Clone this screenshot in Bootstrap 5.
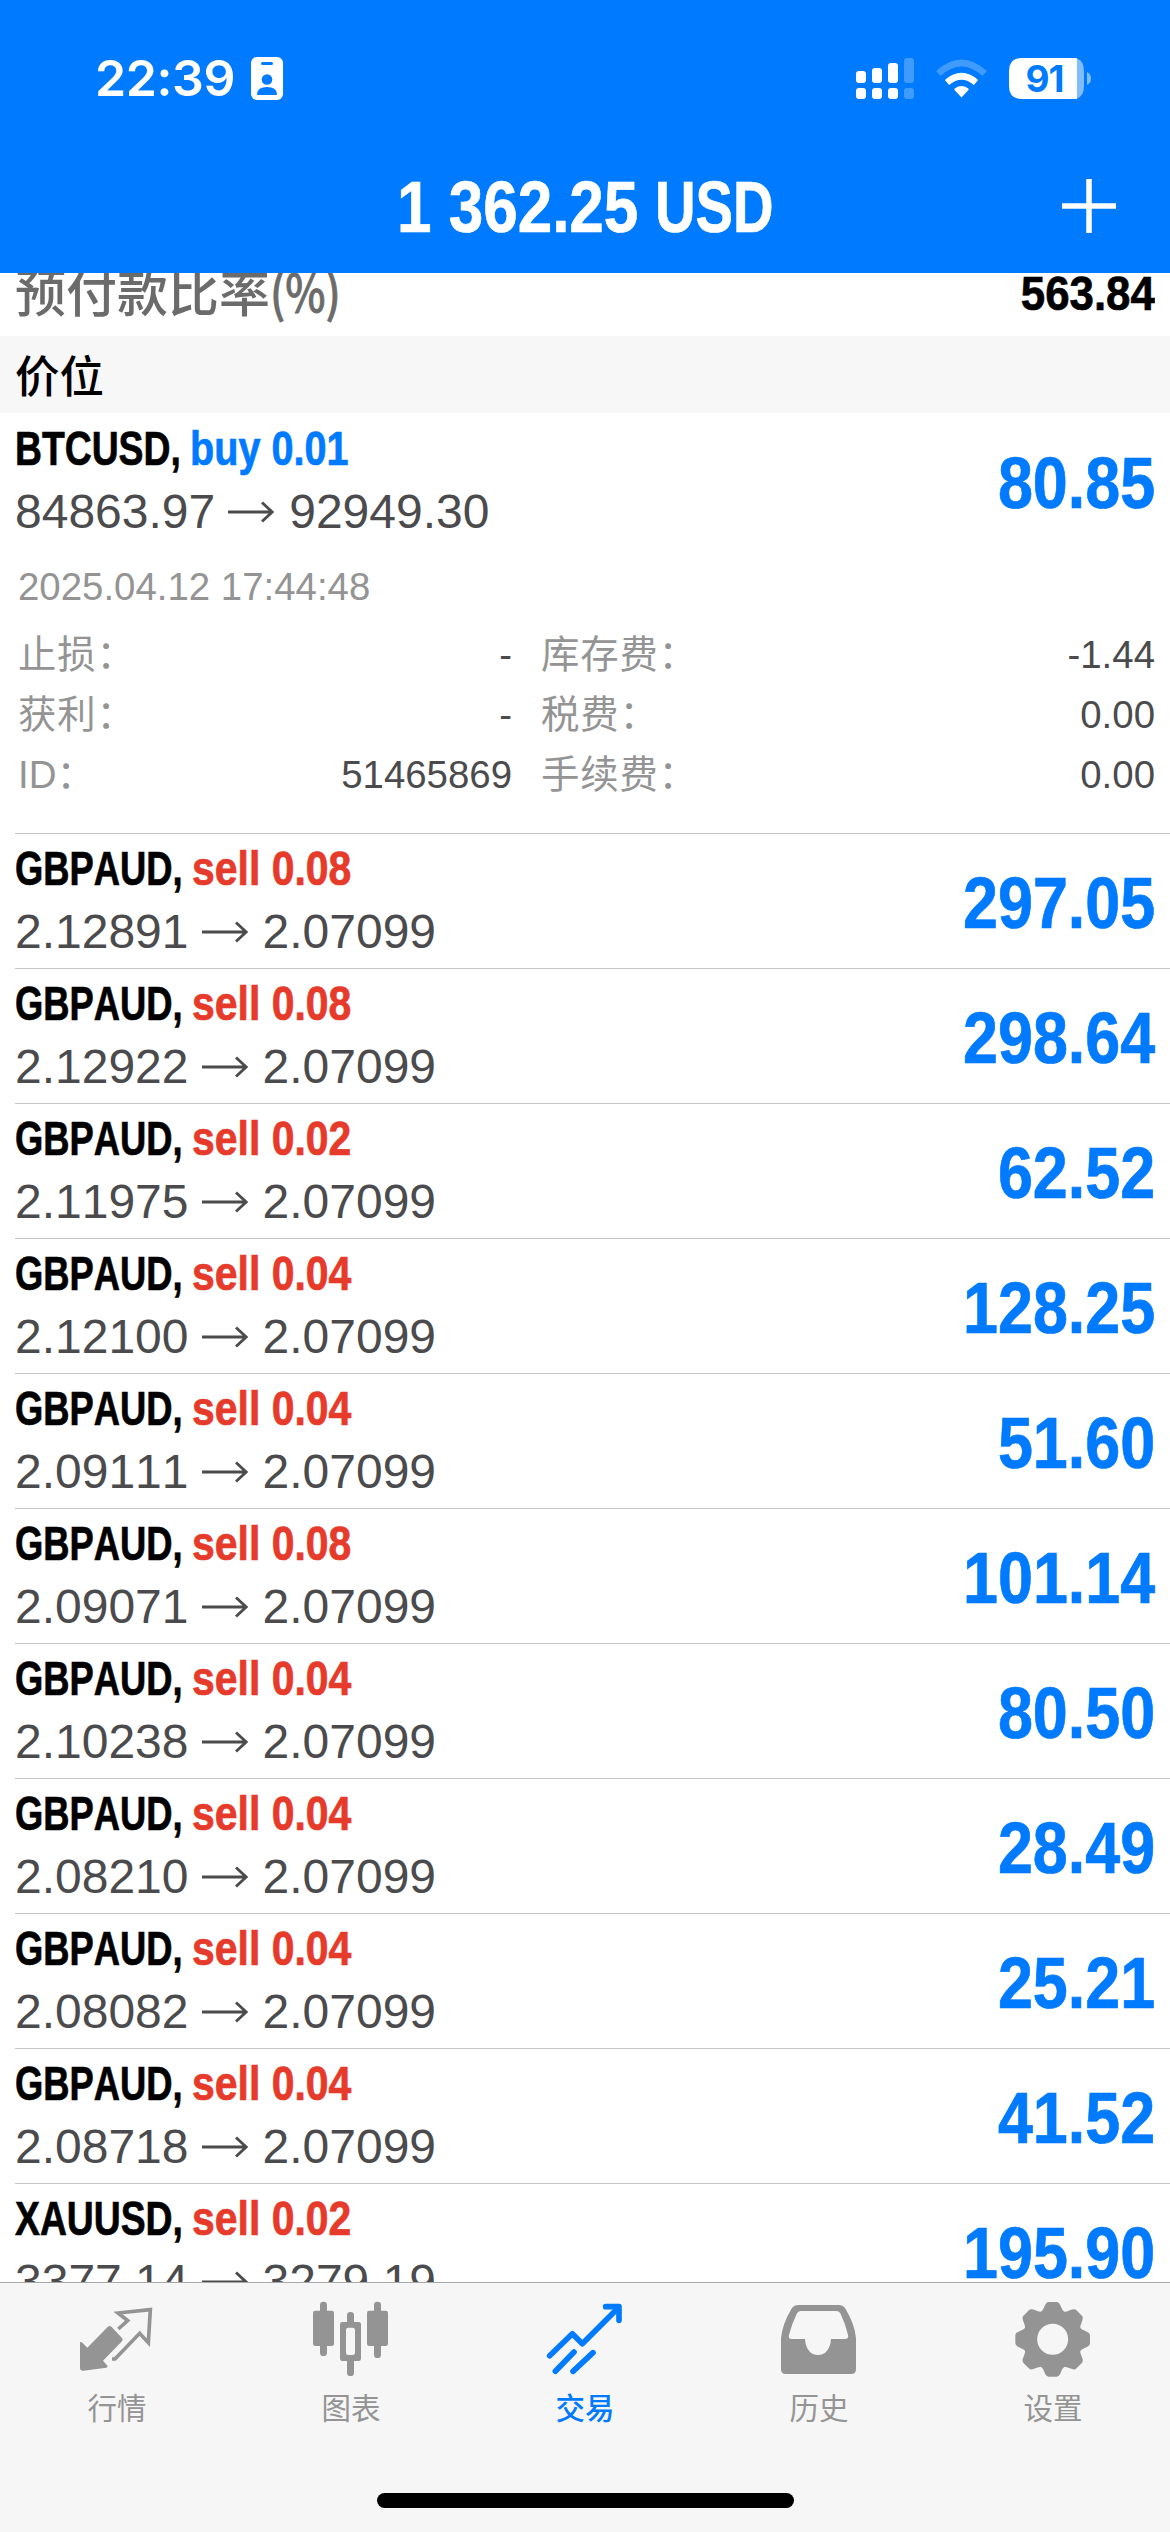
<!DOCTYPE html>
<html lang="zh-CN">
<head>
<meta charset="utf-8">
<meta name="viewport" content="width=device-width, initial-scale=1">
<title>交易</title>
<link href="https://cdn.jsdelivr.net/npm/bootstrap@5.3.0/dist/css/bootstrap.min.css" rel="stylesheet">
<style>
:root { --tint: #007aff; --loss: #e63a2b; --muted: #949494; --ink: #4b4b4d; }
html, body { height: 2532px; overflow: hidden; }
body { font-family: "Liberation Sans", "Noto Sans CJK SC", sans-serif; font-kerning: none; color: #000; background: #fff; }
.screen { width: 1170px; height: 2532px; }
.topbar { height: 273px; background: var(--tint); color: #fff; flex: none; }
.status { height: 152px; padding: 4px 77px 0 95px; }
.clock { font: 600 50px/60px Inter, sans-serif; width: 156px; white-space: nowrap; letter-spacing: -.4px; }
.batt-text { font: 700 37px Inter, sans-serif; letter-spacing: -1px; }
.titlebar { height: 108px; display: grid; grid-template-columns: 1fr auto 1fr; align-items: center; }
.cond { display: inline-block; font-weight: 700; white-space: nowrap; transform-origin: left; -webkit-text-stroke: .7px currentColor; }
.balance { font-size: 72px; line-height: 80px; padding: 2px 0 0 2px; }
.amount { width: 258px; transform: scaleX(.861); }
.currency { width: 120px; transform: scaleX(.78); }
.plus { width: 54px; height: 54px; margin-right: 54px; }
.level { height: 63px; padding: 0 15px; overflow: hidden; flex: none; }
.level-name { font: 500 51px/76px "Noto Sans CJK SC", sans-serif; color: #6b6b6b; white-space: nowrap; margin-top: -21px; }
.pct { display: inline-block; transform: scaleX(.84); transform-origin: left; -webkit-text-stroke: .8px currentColor; }
.level-val { font-size: 49px; line-height: 56px; transform: scaleX(.895); transform-origin: right; margin-top: -8px; }
.section-head { height: 77px; line-height: 75px; padding-left: 15px; background: #f7f7f7; font-size: 44.5px; font-weight: 500; font-family: "Noto Sans CJK SC", sans-serif; flex: none; }
.positions { flex: 1 1 0; min-height: 0; overflow: hidden; }
.deal { margin-left: 15px; padding: 3px 15px 0 0; border-top: 1px solid #c4c4c6; height: 135px; }
.deal.open { height: 420px; border-top-color: transparent; }
.line { height: 63px; line-height: 63px; font-size: 48px; white-space: nowrap; }
.sym { width: 177px; transform: scaleX(.757); }
.sym.btc { width: 175px; transform: scaleX(.777); }
.sym.xau { transform: scaleX(.777); }
.sell { color: var(--loss); transform: scaleX(.853); }
.buy { color: var(--tint); transform: scaleX(.825); }
.price { color: var(--ink); }
.arrow { width: 46px; height: 22px; margin: 0 15px 0 13px; flex: none; }
.profit { font-size: 72px; line-height: 80px; margin-top: 26px; color: var(--tint); transform: scaleX(.873); transform-origin: right; }
.detail { font-size: 38.4px; line-height: 60px; margin-top: 14px; color: var(--muted); padding-left: 3px; }
.stamp { margin-bottom: 8px; }
.detail-l { width: 494px; }
.detail-r { flex: 1; margin-left: 29px; }
.detail b { font-weight: 400; color: var(--ink); }
.detail .caption-cn { letter-spacing: .8px; }
.tabs { height: 250px; background: #f6f6f6; border-top: 1px solid #a9a9ab; flex: none; padding-top: 15px; }
.tab-item { flex: 1; color: #949494; font: 400 29.5px/44px "Noto Sans CJK SC", sans-serif; }
.tab-item svg { width: 80px; height: 80px; }
.tab-item span { margin-top: 6px; }
.tab-item.on { color: var(--tint); font-weight: 500; }
.home { width: 417px; height: 15px; background: #000; margin-bottom: 24px; }
</style>
</head>
<body>
<svg width="0" height="0" class="position-absolute">
  <symbol id="arrow" viewBox="0 0 46 22"><path d="M0 11H44M34 1.5L44.2 11L34 20.5" fill="none" stroke="currentColor" stroke-width="2.8"/></symbol>
</svg>
<div class="screen d-flex flex-column">
  <header class="topbar">
    <div class="status d-flex align-items-center">
      <span class="clock">22:39</span>
      <svg width="32" height="43" viewBox="0 0 32 43"><rect width="32" height="43" rx="6" fill="#fff"/><rect x="10" y="5" width="12" height="3" rx="1.5" fill="#007aff"/><circle cx="16" cy="22.5" r="5.3" fill="#007aff"/><path d="M6 37Q6.500 30 16 30T26 37Q26 38 25 38H7Q6 38 6 37Z" fill="#007aff"/></svg>
      <svg class="ms-auto" width="237" height="44" viewBox="856 55 237 44">
        <g fill="#fff">
          <rect x="856" y="70" width="10" height="12" rx="3"/><rect x="872" y="67" width="10" height="15" rx="3"/><rect x="888" y="62" width="10" height="20" rx="3"/>
          <rect x="856" y="87" width="10" height="11" rx="3"/><rect x="872" y="87" width="10" height="11" rx="3"/><rect x="888" y="87" width="10" height="11" rx="3"/>
          <g opacity=".25"><rect x="904" y="57" width="10" height="25" rx="3"/><rect x="904" y="87" width="10" height="11" rx="3"/></g>
          <path d="M961.500 96.500L954.500 89Q954 88 955 87.300Q961.500 82.500 968 87.300Q969 88 968.500 89Z"/>
        </g>
        <path d="M947 81.500Q961.500 69 976 81.500" fill="none" stroke="#fff" stroke-width="6.500"/>
        <path d="M938.300 72.500Q961.500 51.500 984.700 72.500" fill="none" stroke="#fff" stroke-width="6.500" opacity=".25"/>
        <path d="M1022 57H1077V98H1022Q1009 98 1009 85V70Q1009 57 1022 57Z" fill="#fff"/>
        <path d="M1077 57.500Q1084 60 1084 70V85Q1084 95 1077 97.500Z" fill="#fff" opacity=".5"/>
        <path d="M1087 71Q1091 73 1091 77.500T1087 84Z" fill="#fff" opacity=".5"/>
        <text class="batt-text" x="1044.500" y="91" text-anchor="middle" fill="#007aff">91</text>
      </svg>
    </div>
    <div class="titlebar">
      <span></span><div class="balance d-flex"><span class="cond amount">1 362.25</span><span class="cond currency">USD</span></div>
      <svg class="plus ms-auto" viewBox="0 0 54 54"><path d="M27 0V54M0 27H54" stroke="#fff" stroke-width="5.500"/></svg>
    </div>
  </header>

  <div class="level d-flex justify-content-between align-items-start"><span class="level-name">预付款比率<span class="pct">(%)</span></span><span class="cond level-val">563.84</span></div>
  <div class="section-head">价位</div>

  <main class="positions">
    <div class="deal open">
      <div class="d-flex justify-content-between align-items-start">
        <div><div class="line"><span class="cond sym btc">BTCUSD,</span><span class="cond buy">buy 0.01</span></div>
        <div class="line price d-flex align-items-center">84863.97<svg class="arrow"><use href="#arrow"/></svg>92949.30</div></div>
        <span class="cond profit">80.85</span>
      </div>
      <div class="detail">
        <div class="stamp">2025.04.12 17:44:48</div>
        <div class="d-flex"><div class="detail-l d-flex justify-content-between"><span class="caption-cn">止损：</span><b>-</b></div><div class="detail-r d-flex justify-content-between"><span class="caption-cn">库存费：</span><b>-1.44</b></div></div>
        <div class="d-flex"><div class="detail-l d-flex justify-content-between"><span class="caption-cn">获利：</span><b>-</b></div><div class="detail-r d-flex justify-content-between"><span class="caption-cn">税费：</span><b>0.00</b></div></div>
        <div class="d-flex"><div class="detail-l d-flex justify-content-between"><span>ID：</span><b>51465869</b></div><div class="detail-r d-flex justify-content-between"><span class="caption-cn">手续费：</span><b>0.00</b></div></div>
      </div>
    </div>
    <div class="deal d-flex justify-content-between align-items-start">
      <div><div class="line"><span class="cond sym">GBPAUD,</span><span class="cond sell">sell 0.08</span></div>
      <div class="line price d-flex align-items-center">2.12891<svg class="arrow"><use href="#arrow"/></svg>2.07099</div></div>
      <span class="cond profit">297.05</span>
    </div>
    <div class="deal d-flex justify-content-between align-items-start">
      <div><div class="line"><span class="cond sym">GBPAUD,</span><span class="cond sell">sell 0.08</span></div>
      <div class="line price d-flex align-items-center">2.12922<svg class="arrow"><use href="#arrow"/></svg>2.07099</div></div>
      <span class="cond profit">298.64</span>
    </div>
    <div class="deal d-flex justify-content-between align-items-start">
      <div><div class="line"><span class="cond sym">GBPAUD,</span><span class="cond sell">sell 0.02</span></div>
      <div class="line price d-flex align-items-center">2.11975<svg class="arrow"><use href="#arrow"/></svg>2.07099</div></div>
      <span class="cond profit">62.52</span>
    </div>
    <div class="deal d-flex justify-content-between align-items-start">
      <div><div class="line"><span class="cond sym">GBPAUD,</span><span class="cond sell">sell 0.04</span></div>
      <div class="line price d-flex align-items-center">2.12100<svg class="arrow"><use href="#arrow"/></svg>2.07099</div></div>
      <span class="cond profit">128.25</span>
    </div>
    <div class="deal d-flex justify-content-between align-items-start">
      <div><div class="line"><span class="cond sym">GBPAUD,</span><span class="cond sell">sell 0.04</span></div>
      <div class="line price d-flex align-items-center">2.09111<svg class="arrow"><use href="#arrow"/></svg>2.07099</div></div>
      <span class="cond profit">51.60</span>
    </div>
    <div class="deal d-flex justify-content-between align-items-start">
      <div><div class="line"><span class="cond sym">GBPAUD,</span><span class="cond sell">sell 0.08</span></div>
      <div class="line price d-flex align-items-center">2.09071<svg class="arrow"><use href="#arrow"/></svg>2.07099</div></div>
      <span class="cond profit">101.14</span>
    </div>
    <div class="deal d-flex justify-content-between align-items-start">
      <div><div class="line"><span class="cond sym">GBPAUD,</span><span class="cond sell">sell 0.04</span></div>
      <div class="line price d-flex align-items-center">2.10238<svg class="arrow"><use href="#arrow"/></svg>2.07099</div></div>
      <span class="cond profit">80.50</span>
    </div>
    <div class="deal d-flex justify-content-between align-items-start">
      <div><div class="line"><span class="cond sym">GBPAUD,</span><span class="cond sell">sell 0.04</span></div>
      <div class="line price d-flex align-items-center">2.08210<svg class="arrow"><use href="#arrow"/></svg>2.07099</div></div>
      <span class="cond profit">28.49</span>
    </div>
    <div class="deal d-flex justify-content-between align-items-start">
      <div><div class="line"><span class="cond sym">GBPAUD,</span><span class="cond sell">sell 0.04</span></div>
      <div class="line price d-flex align-items-center">2.08082<svg class="arrow"><use href="#arrow"/></svg>2.07099</div></div>
      <span class="cond profit">25.21</span>
    </div>
    <div class="deal d-flex justify-content-between align-items-start">
      <div><div class="line"><span class="cond sym">GBPAUD,</span><span class="cond sell">sell 0.04</span></div>
      <div class="line price d-flex align-items-center">2.08718<svg class="arrow"><use href="#arrow"/></svg>2.07099</div></div>
      <span class="cond profit">41.52</span>
    </div>
    <div class="deal d-flex justify-content-between align-items-start">
      <div><div class="line"><span class="cond sym xau">XAUUSD,</span><span class="cond sell">sell 0.02</span></div>
      <div class="line price d-flex align-items-center">3377.14<svg class="arrow"><use href="#arrow"/></svg>3279.19</div></div>
      <span class="cond profit">195.90</span>
    </div>
  </main>

  <nav class="tabs d-flex flex-column justify-content-between align-items-center">
    <div class="d-flex w-100">
      <div class="tab-item d-flex flex-column align-items-center">
        <svg viewBox="51 24 240 240" fill="currentColor">
          <path d="M60 157Q63 154 67 158L82 173L143 111Q149 105 155 111L186 144Q190 149 186 154L129 212L141 226Q145 231 139 233L70 242Q60 243 60 233Z"/>
          <path d="M175 117L203 92L174 69L271 59L265 158L239 130L165 207H156" fill="none" stroke="currentColor" stroke-width="11"/>
        </svg><span>行情</span></div>
      <div class="tab-item d-flex flex-column align-items-center">
        <svg viewBox="753 24 240 240" fill="currentColor">
          <rect x="759" y="62" width="63" height="106" rx="7"/><rect x="780" y="35" width="21" height="163" rx="10"/>
          <rect x="921" y="62" width="63" height="106" rx="7"/><rect x="942" y="35" width="21" height="169" rx="10"/>
          <rect x="861" y="66" width="21" height="40" rx="10"/><rect x="861" y="200" width="21" height="58" rx="10"/>
          <path fill-rule="evenodd" d="M847 96H896Q903 96 903 103V206Q903 213 896 213H847Q840 213 840 206V103Q840 96 847 96ZM865 113Q858 113 858 120V188Q858 195 865 195H878Q885 195 885 188V120Q885 113 878 113Z"/>
        </svg><span>图表</span></div>
      <div class="tab-item on d-flex flex-column align-items-center">
        <svg viewBox="75 54 240 240" fill="none" stroke="currentColor" stroke-linecap="round" stroke-width="17">
          <path d="M89 227L157 161L187 191L292 86" stroke-linejoin="round" stroke-linecap="round"/>
          <path d="M257 80H297V121" stroke-linejoin="round"/>
          <path d="M106 274L162 216M159 274L219 218"/>
        </svg><span>交易</span></div>
      <div class="tab-item d-flex flex-column align-items-center">
        <svg viewBox="777 54 240 240" fill="currentColor">
          <path fill-rule="evenodd" d="M835 75H956Q970 75 977 87Q1005 135 1008 175V268Q1008 282 994 282H797Q783 282 783 268V175Q786 135 814 87Q821 75 835 75ZM843 93Q834 93 830 102Q815 132 807 165Q804 177 815 177H855C857 208 872 225 894 225S931 208 933 177H974Q987 177 984 165Q977 133 962 102Q958 93 949 93Z"/>
        </svg><span>历史</span></div>
      <div class="tab-item d-flex flex-column align-items-center">
        <svg viewBox="339 384 240 240" fill="currentColor">
          <g transform="translate(458 508)">
            <circle r="67" fill="none" stroke="currentColor" stroke-width="41"/>
            <g id="teeth"><path id="tooth" d="M-38 -79Q-29 -86 -25 -98Q-20 -112 -12 -112H12Q20 -112 25 -98Q29 -86 38 -79Z"/>
            <use href="#tooth" transform="rotate(45)"/><use href="#tooth" transform="rotate(90)"/><use href="#tooth" transform="rotate(135)"/></g>
            <use href="#teeth" transform="rotate(180)"/>
          </g>
        </svg><span>设置</span></div>
    </div>
    <div class="home rounded-pill"></div>
  </nav>
</div>
<script src="https://cdn.jsdelivr.net/npm/bootstrap@5.3.0/dist/js/bootstrap.bundle.min.js"></script>
</body>
</html>
